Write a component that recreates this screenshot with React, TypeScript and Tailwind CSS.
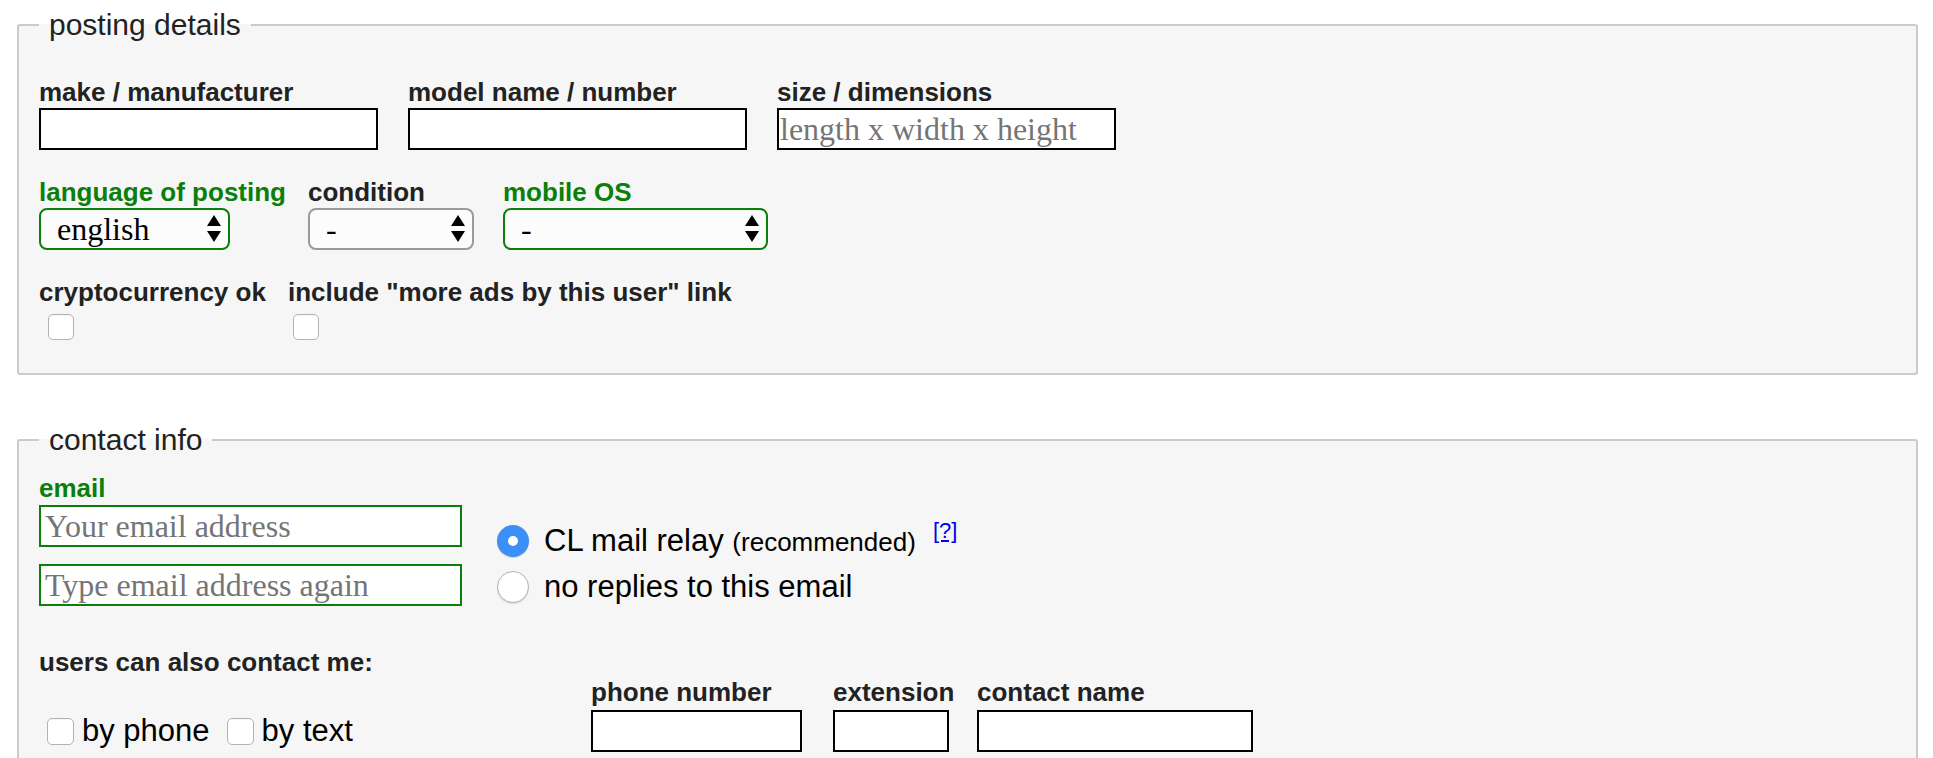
import React from 'react';

const Label = ({ children, green = false }: { children: React.ReactNode; green?: boolean }) => (
  <div className={`whitespace-nowrap text-[26px] font-bold leading-[30px] ${green ? 'text-[#0a7f0a]' : 'text-[#222]'}`}>
    {children}
  </div>
);

const Arrows = () => (
  <svg
    className="pointer-events-none absolute right-[9px] top-1/2 -translate-y-1/2"
    width="14"
    height="28"
    viewBox="0 0 14 28"
  >
    <path d="M7 0 L14 11 L0 11 Z" fill="#000" />
    <path d="M0 16 L14 16 L7 27 Z" fill="#000" />
  </svg>
);

const Select = ({ width, value, green = false }: { width: string; value: string; green?: boolean }) => (
  <div className={`relative mt-[1px] h-[42px] ${width}`}>
    <select
      defaultValue={value}
      className={`h-full w-full appearance-none rounded-[8px] border-2 bg-[#fcfcfc] pl-[16px] font-['Liberation_Serif',serif] text-[32px] leading-[36px] text-black outline-none ${
        green ? 'border-[#0a7f0a]' : 'border-[#9a9a9a]'
      }`}
    >
      <option value={value}>{value}</option>
    </select>
    <Arrows />
  </div>
);

const Checkbox = ({ className = '' }: { className?: string }) => (
  <input
    type="checkbox"
    className={`block appearance-none rounded-[5px] border border-[#b3b3b3] bg-white shadow-[inset_0_1px_1px_rgba(0,0,0,0.04)] ${className}`}
  />
);

const TextInput = ({ width, placeholder, green = false, pad = 'px-[1px]' }: { width: string; placeholder?: string; green?: boolean; pad?: string }) => (
  <input
    type="text"
    placeholder={placeholder}
    className={`block h-[42px] ${width} border-2 bg-white ${pad} font-['Liberation_Serif',serif] text-[32px] text-black outline-none placeholder:text-[#757575] ${
      green ? 'border-[#0a7f0a]' : 'border-black'
    }`}
  />
);

export default function App() {
  return (
    <div className="h-[758px] overflow-hidden bg-white font-['Liberation_Sans',Arial,sans-serif] text-[#222]">
      {/* posting details */}
      <fieldset className="ml-[17px] mr-[15px] mt-[8px] rounded-[3px] border-2 border-[#cbcbcb] bg-[#f6f6f6] px-[20px] pb-[33px] pt-0">
        <legend className="px-[10px] text-[30px] leading-[34px] text-[#222]">posting details</legend>

        <div className="mt-[35px] flex gap-x-[30px]">
          <div>
            <Label>make / manufacturer</Label>
            <div className="mt-[1px]"><TextInput width="w-[339px]" /></div>
          </div>
          <div>
            <Label>model name / number</Label>
            <div className="mt-[1px]"><TextInput width="w-[339px]" /></div>
          </div>
          <div>
            <Label>size / dimensions</Label>
            <div className="mt-[1px]"><TextInput width="w-[339px]" placeholder="length x width x height" /></div>
          </div>
        </div>

        <div className="mt-[27px] flex">
          <div className="w-[269px]">
            <Label green>language of posting</Label>
            <Select width="w-[191px]" value="english" green />
          </div>
          <div className="w-[195px]">
            <Label>condition</Label>
            <Select width="w-[166px]" value="-" />
          </div>
          <div>
            <Label green>mobile OS</Label>
            <Select width="w-[265px]" value="-" green />
          </div>
        </div>

        <div className="mt-[27px] flex">
          <div className="w-[249px]">
            <Label>cryptocurrency ok</Label>
            <Checkbox className="ml-[9px] mt-[7px] h-[26px] w-[26px]" />
          </div>
          <div>
            <Label>include "more ads by this user" link</Label>
            <Checkbox className="ml-[5px] mt-[7px] h-[26px] w-[26px]" />
          </div>
        </div>
      </fieldset>

      {/* contact info */}
      <fieldset className="ml-[17px] mr-[15px] mt-[48px] rounded-[3px] border-2 border-[#cbcbcb] bg-[#f6f6f6] px-[20px] pb-[40px] pt-0">
        <legend className="px-[10px] text-[30px] leading-[34px] text-[#222]">contact info</legend>

        <div className="mt-[16px] flex items-start">
          <div className="w-[423px]">
            <Label green>email</Label>
            <div className="mt-[2px]">
              <TextInput width="w-[423px]" placeholder="Your email address" green pad="px-[4px]" />
            </div>
            <div className="mt-[17px]">
              <TextInput width="w-[423px]" placeholder="Type email address again" green pad="px-[4px]" />
            </div>
          </div>

          <div className="ml-[35px] mt-[45px] flex flex-col">
            <div className="flex h-[46px] items-center">
              <span className="flex h-[32px] w-[32px] items-center justify-center rounded-full bg-[#3b8ff6] shadow-[0_1px_1px_rgba(0,0,0,0.15)]">
                <span className="h-[10px] w-[10px] rounded-full bg-white" />
              </span>
              <span className="ml-[15px] whitespace-nowrap text-[31px] leading-[36px] text-black">
                CL mail relay <span className="text-[26px]">(recommended)</span>
                <a
                  href="#"
                  className="relative -top-[13px] ml-[17px] inline-block text-[22px] leading-none text-[#0000ee] underline"
                >
                  [?]
                </a>
              </span>
            </div>
            <div className="flex h-[46px] items-center">
              <span className="h-[32px] w-[32px] rounded-full border border-[#b3b3b3] bg-white shadow-[0_1px_1px_rgba(0,0,0,0.12)]" />
              <span className="ml-[15px] whitespace-nowrap text-[31px] leading-[36px] text-black">no replies to this email</span>
            </div>
          </div>
        </div>

        <div className="mt-[37px]">
          <Label>users can also contact me:</Label>
        </div>
        <div className="flex items-end">
          <div className="flex h-[42px] w-[552px] items-center text-[31px] leading-[36px] text-black">
            <Checkbox className="ml-[8px] h-[27px] w-[27px]" />
            <span className="ml-[8px]">by phone</span>
            <Checkbox className="ml-[17px] h-[27px] w-[27px]" />
            <span className="ml-[8px]">by text</span>
          </div>
          <div className="w-[242px]">
            <Label>phone number</Label>
            <div className="mt-[3px]"><TextInput width="w-[211px]" /></div>
          </div>
          <div className="w-[144px]">
            <Label>extension</Label>
            <div className="mt-[3px]"><TextInput width="w-[116px]" /></div>
          </div>
          <div>
            <Label>contact name</Label>
            <div className="mt-[3px]"><TextInput width="w-[276px]" /></div>
          </div>
        </div>
      </fieldset>
    </div>
  );
}
